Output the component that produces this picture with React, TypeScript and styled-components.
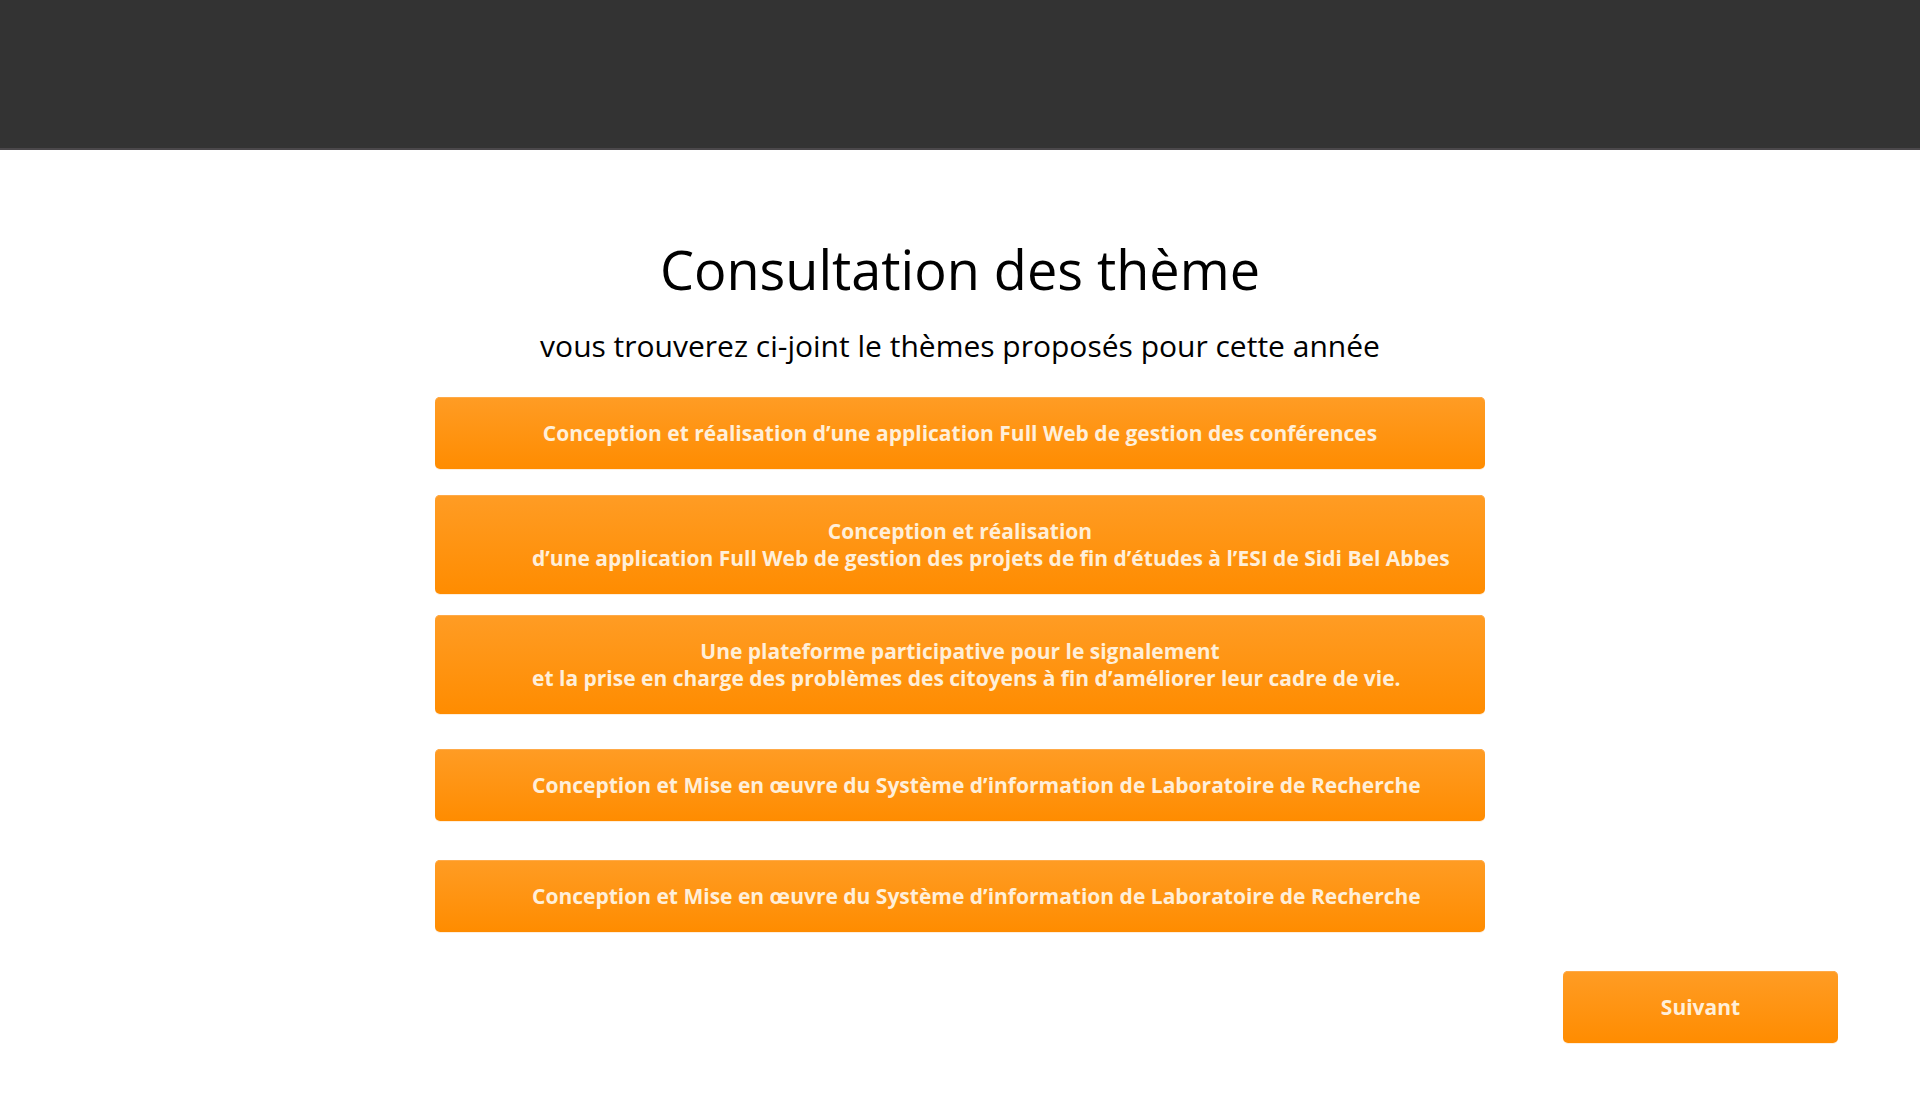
import React from "react";
import styled, { createGlobalStyle } from "styled-components";

const GlobalStyle = createGlobalStyle`
  *, *::before, *::after {
    box-sizing: border-box;
  }

  body {
    margin: 0;
    background: #fff;
    color: #000;
    font-family: "Open Sans", "Noto Sans", sans-serif;
  }
`;

const Header = styled.header`
  height: 150px;
  background: #333;
  border-bottom: 2px solid #4b484b;
`;

const Main = styled.main`
  display: flex;
  flex-direction: column;
  align-items: center;
  padding: 83px 82px 73px;
`;

const Title = styled.h1`
  margin: 0;
  font-size: 54px;
  font-weight: 400;
  line-height: 72px;
`;

const Intro = styled.p`
  margin: 20px 0 31px;
  font-size: 30px;
  font-weight: 400;
  line-height: 41px;
`;

const ThemeList = styled.ul`
  display: flex;
  flex-direction: column;
  width: 100%;
  max-width: 1050px;
  margin: 0;
  padding: 0;
  list-style: none;
`;

const ThemeItem = styled.li<{ $gap: number }>`
  margin-bottom: ${({ $gap }) => $gap}px;
`;

const Button = styled.button`
  display: block;
  padding: 23px 34px 22px;
  border: 0;
  border-radius: 5px;
  background: linear-gradient(#ff9c24, #ff8c00);
  box-shadow: inset 0 1px 0 #ffaa48, 0 1px 0 #ffeedb;
  color: #ffefd9;
  font-family: inherit;
  font-size: 21px;
  font-weight: 700;
  line-height: 27px;
  text-align: center;
  cursor: pointer;
`;

const ThemeButton = styled(Button)`
  width: 100%;
`;

const NextButton = styled(Button)`
  align-self: flex-end;
  width: 275px;
`;

const Line = styled.span<{ $indented?: boolean }>`
  display: block;
  padding-left: ${({ $indented }) => ($indented ? 63 : 0)}px;
  text-align: ${({ $indented }) => ($indented ? "left" : "center")};
`;

type ThemeLine = { text: string; indented?: boolean };

const themes: { gap: number; lines: ThemeLine[] }[] = [
  {
    gap: 26,
    lines: [
      { text: "Conception et réalisation d’une application Full Web de gestion des conférences" },
    ],
  },
  {
    gap: 21,
    lines: [
      { text: "Conception et réalisation" },
      {
        text: "d’une application Full Web de gestion des projets de fin d’études à l’ESI de Sidi Bel Abbes",
        indented: true,
      },
    ],
  },
  {
    gap: 35,
    lines: [
      { text: "Une plateforme participative pour le signalement" },
      {
        text: "et la prise en charge des problèmes des citoyens à fin d’améliorer leur cadre de vie.",
        indented: true,
      },
    ],
  },
  {
    gap: 39,
    lines: [
      {
        text: "Conception et Mise en œuvre du Système d’information de Laboratoire de Recherche",
        indented: true,
      },
    ],
  },
  {
    gap: 39,
    lines: [
      {
        text: "Conception et Mise en œuvre du Système d’information de Laboratoire de Recherche",
        indented: true,
      },
    ],
  },
];

export default function App() {
  return (
    <>
      <GlobalStyle />
      <Header />
      <Main>
        <Title>Consultation des thème</Title>
        <Intro>vous trouverez ci-joint le thèmes proposés pour cette année</Intro>
        <ThemeList>
          {themes.map((theme, index) => (
            <ThemeItem key={index} $gap={theme.gap}>
              <ThemeButton type="button">
                {theme.lines.map((line) => (
                  <Line key={line.text} $indented={line.indented}>
                    {line.text}
                  </Line>
                ))}
              </ThemeButton>
            </ThemeItem>
          ))}
        </ThemeList>
        <NextButton type="button">Suivant</NextButton>
      </Main>
    </>
  );
}
